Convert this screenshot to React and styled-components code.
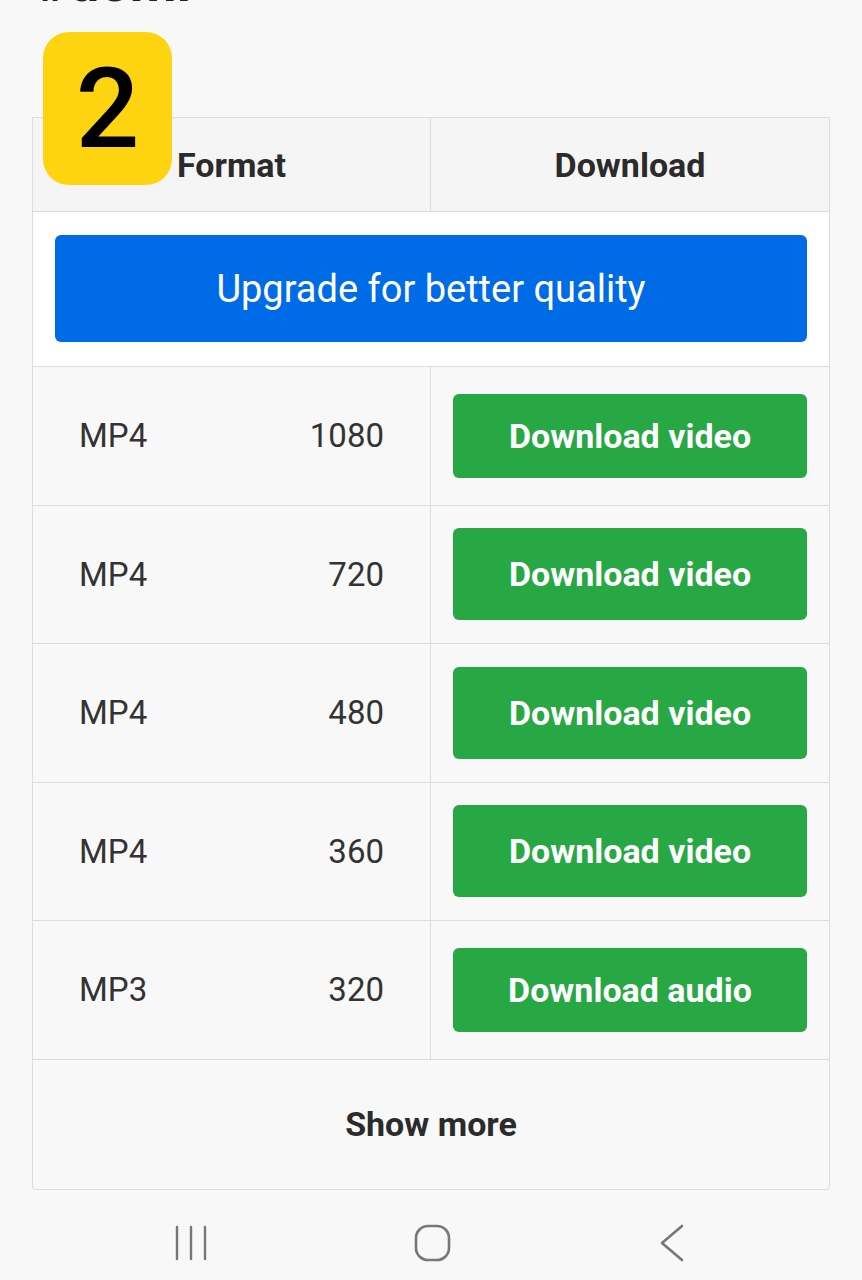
import styled, { createGlobalStyle } from 'styled-components';

const rows = [
  { format: 'MP4', quality: '1080', label: 'Download video', tall: false },
  { format: 'MP4', quality: '720', label: 'Download video', tall: true },
  { format: 'MP4', quality: '480', label: 'Download video', tall: true },
  { format: 'MP4', quality: '360', label: 'Download video', tall: true },
  { format: 'MP3', quality: '320', label: 'Download audio', tall: false },
];

export default function App() {
  return (
    <>
      <GlobalStyle />
      <Page>
        <Badge>2</Badge>
        <TopArea>
          <Heading>#domi</Heading>
        </TopArea>
        <Table>
          <HeadRow>
            <HeadCell>Format</HeadCell>
            <HeadCell $divider>Download</HeadCell>
          </HeadRow>
          <UpgradeRow>
            <UpgradeButton>Upgrade for better quality</UpgradeButton>
          </UpgradeRow>
          {rows.map((row, index) => (
            <DataRow key={index}>
              <InfoCell>
                <span>{row.format}</span>
                <span>{row.quality}</span>
              </InfoCell>
              <ActionCell>
                <GreenButton $tall={row.tall}>{row.label}</GreenButton>
              </ActionCell>
            </DataRow>
          ))}
          <MoreRow>Show more</MoreRow>
        </Table>
        <NavBar>
          <svg width="34" height="36" viewBox="0 0 34 36">
            <path d="M3 2v32M17 2v32M31 2v32" stroke="#777" strokeWidth="2.4" strokeLinecap="round" />
          </svg>
          <svg width="38" height="38" viewBox="0 0 38 38">
            <rect x="2" y="2" width="33" height="34" rx="12" fill="none" stroke="#777" strokeWidth="2.6" />
          </svg>
          <svg width="28" height="38" viewBox="0 0 28 38">
            <path d="M24 2L4 19l20 17" fill="none" stroke="#777" strokeWidth="2.6" strokeLinecap="round" strokeLinejoin="round" />
          </svg>
        </NavBar>
      </Page>
    </>
  );
}

const GlobalStyle = createGlobalStyle`
  html, body {
    margin: 0;
    padding: 0;
    background: #f8f8f8;
  }
  body {
    font-family: Roboto, "Liberation Sans", sans-serif;
    color: #333;
  }
`;

const Page = styled.div`
  position: relative;
  width: 862px;
  height: 1280px;
  overflow: hidden;
  background: #f8f8f8;
  padding: 0 32px;
  box-sizing: border-box;
`;

const TopArea = styled.div`
  display: flow-root;
  height: 117px;
`;

const Heading = styled.h1`
  margin: -42px 0 0 5px;
  font-size: 54px;
  line-height: 50px;
  font-weight: 700;
  color: #222;
`;

const Badge = styled.div`
  position: absolute;
  left: 43px;
  top: 32px;
  width: 129px;
  height: 153px;
  border-radius: 26px;
  background: #fdd40f;
  color: #000;
  font-size: 112px;
  font-weight: 500;
  line-height: 1;
  display: flex;
  align-items: center;
  justify-content: center;
  z-index: 2;
`;

const Table = styled.div`
  width: 798px;
  border: 1px solid #dcdcdc;
  border-radius: 0 0 4px 4px;
  box-sizing: border-box;
  background: #f8f8f8;
`;

const HeadRow = styled.div`
  display: grid;
  grid-template-columns: 397px 1fr;
  height: 93px;
  background: #f5f5f5;
`;

const HeadCell = styled.div`
  display: flex;
  align-items: center;
  justify-content: center;
  font-size: 34px;
  font-weight: 700;
  color: #2b2b2b;
  border-left: ${p => (p.$divider ? '1px solid #dcdcdc' : 'none')};
`;

const UpgradeRow = styled.div`
  border-top: 1px solid #dcdcdc;
  background: #fff;
  height: 155px;
  padding: 23px 22px;
  box-sizing: border-box;
`;

const UpgradeButton = styled.div`
  height: 107px;
  border-radius: 6px;
  background: #006be6;
  color: #fff;
  font-size: 38px;
  display: flex;
  align-items: center;
  justify-content: center;
`;

const DataRow = styled.div`
  display: grid;
  grid-template-columns: 397px 1fr;
  height: 138.5px;
  border-top: 1px solid #dcdcdc;
  box-sizing: border-box;
`;

const InfoCell = styled.div`
  display: flex;
  align-items: center;
  justify-content: space-between;
  padding: 0 46px;
  font-size: 33px;
  color: #333;
`;

const ActionCell = styled.div`
  display: flex;
  align-items: center;
  padding: 0 22px;
  border-left: 1px solid #dcdcdc;
`;

const GreenButton = styled.div`
  flex: 1;
  height: ${p => (p.$tall ? '92px' : '84px')};
  border-radius: 6px;
  background: #28a745;
  color: #fff;
  font-size: 34px;
  font-weight: 700;
  display: flex;
  align-items: center;
  justify-content: center;
`;

const MoreRow = styled.div`
  height: 129px;
  border-top: 1px solid #dcdcdc;
  display: flex;
  align-items: center;
  justify-content: center;
  font-size: 34px;
  font-weight: 700;
  color: #2b2b2b;
`;

const NavBar = styled.div`
  display: flex;
  justify-content: space-between;
  align-items: center;
  padding: 34px 144px 0 142px;
`;
